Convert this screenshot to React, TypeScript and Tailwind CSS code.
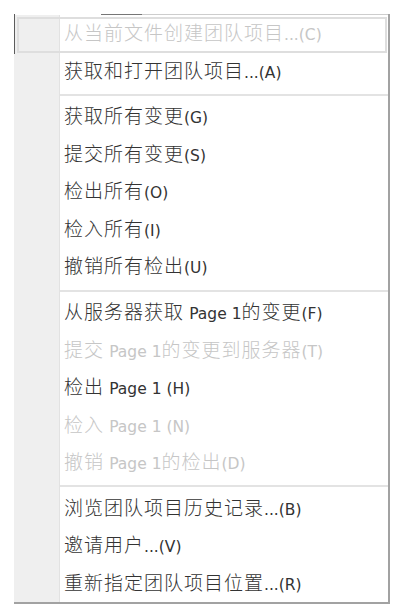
type Item = { cn: string; tail?: string; key: string; disabled?: boolean } | "sep";

const ITEMS: Item[] = [
  { cn: "从当前文件创建团队项目", key: "...(C)", disabled: true },
  { cn: "获取和打开团队项目", key: "...(A)" },
  "sep",
  { cn: "获取所有变更", key: "(G)" },
  { cn: "提交所有变更", key: "(S)" },
  { cn: "检出所有", key: "(O)" },
  { cn: "检入所有", key: "(I)" },
  { cn: "撤销所有检出", key: "(U)" },
  "sep",
  { cn: "从服务器获取 ", tail: "Page 1|的变更", key: "(F)" },
  { cn: "提交 ", tail: "Page 1|的变更到服务器", key: "(T)", disabled: true },
  { cn: "检出 ", tail: "Page 1 |", key: "(H)" },
  { cn: "检入 ", tail: "Page 1 |", key: "(N)", disabled: true },
  { cn: "撤销 ", tail: "Page 1|的检出", key: "(D)", disabled: true },
  "sep",
  { cn: "浏览团队项目历史记录", key: "...(B)" },
  { cn: "邀请用户", key: "...(V)" },
  { cn: "重新指定团队项目位置", key: "...(R)" },
];

const cjk = "font-['Noto_Sans_CJK_SC',sans-serif] text-[19px] font-light tracking-[1px]";
const latin = "font-['DejaVu_Sans','Liberation_Sans',sans-serif] text-[15.5px] font-normal tracking-normal";

function Row({ item }: { item: Exclude<Item, "sep"> }) {
  const [latinPart, cnPart] = item.tail ? item.tail.split("|") : ["", ""];
  return (
    <div
      className={`flex h-[37.5px] items-center whitespace-pre pl-[4px] ${
        item.disabled ? "text-[#c6c6c6]" : "text-[#333333]"
      }`}
    >
      <span className={`${cjk} leading-[26px]`}>
        {item.cn}
        {latinPart && <span className={latin}>{latinPart}</span>}
        {cnPart}
        <span className={latin}>{item.key}</span>
      </span>
    </div>
  );
}

export default function App() {
  return (
    <div className="h-[614px] w-[400px] bg-white pl-[14px] pt-[14px]">
      <div className="relative flex w-[376px] flex-col border-b-2 border-r-2 border-[#a2a2a2]">
        {/* top edge, partly under the menu bar item */}
        <div className="flex h-px">
          <div className="w-[87px]" />
          <div className="w-[41px] bg-[#767676]" />
          <div className="flex-1 bg-[#cdcdcd]" />
        </div>

        <div className="flex">
          <div className="w-[46px] border-r border-[#e2e2e2] bg-[#efefef]" />
          <div className="flex flex-1 flex-col">
            {ITEMS.map((item, i) =>
              item === "sep" ? (
                <div key={i} className="flex h-[8.17px] flex-col pt-[4px]">
                  <div className="h-[2px] w-full bg-[#e3e3e3]" />
                </div>
              ) : (
                <Row key={i} item={item} />
              ),
            )}
          </div>
        </div>

        {/* keyboard focus rectangle on the first item */}
        <div className="absolute left-[3px] top-[3px] h-[36px] w-[370px] border-2 border-[#dedede]" />
        {/* caret edge on the left */}
        <div className="absolute left-0 top-0 h-[40px] w-px bg-[#5c5c5c]" />
      </div>
    </div>
  );
}
